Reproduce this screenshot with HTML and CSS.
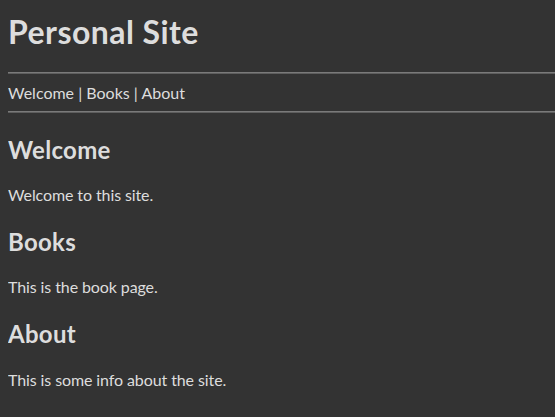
FILE: index.html
```html
<!DOCTYPE html>
<html lang="en">
<head>
<meta charset="utf-8">
<title>Personal Site</title>
<link rel="stylesheet" href="styles.css">
</head>
<body>
<header class="site-header">
  <h1 class="site-title">Personal Site</h1>
</header>
<hr class="rule">
<nav class="site-nav">
  <a href="#welcome" class="nav-link">Welcome</a> | <a href="#books" class="nav-link">Books</a> | <a href="#about" class="nav-link">About</a>
</nav>
<hr class="rule">
<main>
  <section id="welcome" class="section">
    <h2 class="section-title">Welcome</h2>
    <p class="section-text">Welcome to this site.</p>
  </section>
  <section id="books" class="section">
    <h2 class="section-title">Books</h2>
    <p class="section-text">This is the book page.</p>
  </section>
  <section id="about" class="section">
    <h2 class="section-title">About</h2>
    <p class="section-text">This is some info about the site.</p>
  </section>
</main>
</body>
</html>
```
FILE: styles.css
```css
html {
  background: #333333;
}
body {
  margin: 8px 0 8px 8px;
  font-family: Lato, "Open Sans", sans-serif;
  font-size: 16px;
  line-height: 1.33;
  color: #dddddd;
  background: #333333;
}
.site-header {
  padding-top: 3px;
}
.site-title {
  margin: 0 0 18.5px 0;
  font-size: 32px;
  font-weight: bold;
  letter-spacing: 0.45px;
}
.rule {
  height: 0;
  margin: 8px 0;
  border: none;
  border-top: 1px solid #7a7a7a;
  border-bottom: 1px solid #5e5e5e;
}
.site-nav {
  color: #dddddd;
}
.nav-link {
  color: #dddddd;
  text-decoration: none;
}
.section-title {
  margin: 20.5px 0 18.5px 0;
  font-size: 24px;
  font-weight: bold;
  letter-spacing: 0.3px;
}
.section-text {
  margin: 16px 0;
  letter-spacing: -0.1px;
}
```
